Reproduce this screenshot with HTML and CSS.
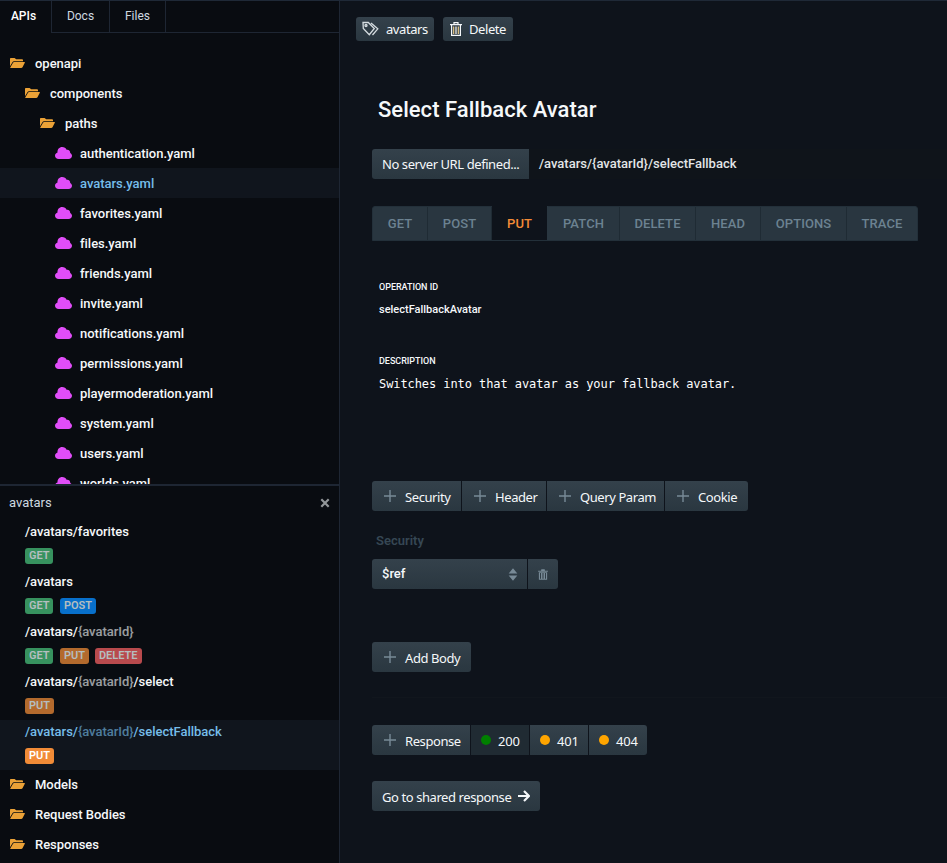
FILE: index.html
```html
<!DOCTYPE html>
<html lang="en">
<head>
<meta charset="utf-8">
<title>API editor</title>
<link rel="stylesheet" href="styles.css">
</head>
<body>
<svg class="defs" aria-hidden="true">
  <symbol id="folder" viewBox="0 0 15 10"><path d="M0 .8Q0 0 .8 0H4.600L6.200 1.200H12Q13 1.200 13 2V3.300H4Q3 3.300 2.600 4L0 8.300Z"/><path d="M4.100 4H14.400Q15.200 4 14.800 4.800L12.500 9.200Q12.100 10 11.200 10H.7Q0 10 .4 9.200L3 4.800Q3.400 4 4.100 4Z"/></symbol>
  <symbol id="cloud" viewBox="0 0 17 12"><path d="M3.700 12C1.500 12 0 10.600 0 8.700 0 7 1.200 5.800 2.500 5.400 2.300 2.400 4.300 0 7.200 0 9.300 0 10.800 1 11.600 2.700 13.800 2.300 15.400 3.800 15.200 5.900 16.300 6.500 17 7.500 17 8.700 17 10.600 15.600 12 13.500 12Z"/></symbol>
  <symbol id="trash" viewBox="0 0 16 16"><path fill-rule="evenodd" d="M14.500 3h-4V1.500Q10.500 1 10 1H6Q5.500 1 5.500 1.500V3h-4v1.300h13zM2.500 5h11v10H2.500zM4 6v7.500h1.300V6zM7.300 6v7.500h1.400V6zM10.700 6v7.500H12V6z"/></symbol>
  <symbol id="trash-outline" viewBox="0 0 12 14"><path fill="none" stroke="currentColor" stroke-width="1.200" d="M0 2.600h12M4 2.500V.7h4v1.800M1.600 3v10.300h8.800V3"/><path fill="#d8bc80" d="M3 4.500h1.300V12H3z"/><path d="M5.400 4.500h1.200V12H5.400z"/><path fill="#d8bc80" d="M7.700 4.500H9V12H7.700z"/></symbol>
  <symbol id="plus" viewBox="0 0 12 12"><path d="M5.300 0h1.400v5.300H12v1.400H6.700V12H5.300V6.700H0V5.300h5.300z"/></symbol>
</svg>
<div class="app">
  <aside class="sidebar">
    <nav class="tabs"><span class="tab tab-apis">APIs</span><span class="tab tab-docs">Docs</span><span class="tab tab-files">Files</span><span class="tab-fill"></span></nav>
    <div class="tree">
      <div class="row"><svg class="folder"><use href="#folder"/></svg><span>openapi</span></div>
      <div class="row level-1"><svg class="folder"><use href="#folder"/></svg><span>components</span></div>
      <div class="row level-2"><svg class="folder"><use href="#folder"/></svg><span>paths</span></div>
      <div class="row level-3"><svg class="cloud"><use href="#cloud"/></svg><span>authentication.yaml</span></div>
      <div class="row level-3 selected"><svg class="cloud"><use href="#cloud"/></svg><span>avatars.yaml</span></div>
      <div class="row level-3"><svg class="cloud"><use href="#cloud"/></svg><span>favorites.yaml</span></div>
      <div class="row level-3"><svg class="cloud"><use href="#cloud"/></svg><span>files.yaml</span></div>
      <div class="row level-3"><svg class="cloud"><use href="#cloud"/></svg><span>friends.yaml</span></div>
      <div class="row level-3"><svg class="cloud"><use href="#cloud"/></svg><span>invite.yaml</span></div>
      <div class="row level-3"><svg class="cloud"><use href="#cloud"/></svg><span>notifications.yaml</span></div>
      <div class="row level-3"><svg class="cloud"><use href="#cloud"/></svg><span>permissions.yaml</span></div>
      <div class="row level-3"><svg class="cloud"><use href="#cloud"/></svg><span>playermoderation.yaml</span></div>
      <div class="row level-3"><svg class="cloud"><use href="#cloud"/></svg><span>system.yaml</span></div>
      <div class="row level-3"><svg class="cloud"><use href="#cloud"/></svg><span>users.yaml</span></div>
      <div class="row level-3"><svg class="cloud"><use href="#cloud"/></svg><span>worlds.yaml</span></div>
    </div>
    <div class="search"><span>avatars</span><svg class="close" viewBox="0 0 10 10"><path d="M1.300 1.300l7.400 7.400M8.700 1.300L1.300 8.700"/></svg></div>
    <div class="entry"><div class="path">/avatars/favorites</div><div class="badges"><b class="get">GET</b></div></div>
    <div class="entry"><div class="path">/avatars</div><div class="badges"><b class="get">GET</b><b class="post">POST</b></div></div>
    <div class="entry"><div class="path">/avatars/<i>{avatarId}</i></div><div class="badges"><b class="get">GET</b><b class="put">PUT</b><b class="delete">DELETE</b></div></div>
    <div class="entry"><div class="path">/avatars/<i>{avatarId}</i>/select</div><div class="badges"><b class="put">PUT</b></div></div>
    <div class="entry selected"><div class="path">/avatars/<i>{avatarId}</i>/selectFallback</div><div class="badges"><b class="put">PUT</b></div></div>
    <div class="row"><svg class="folder"><use href="#folder"/></svg><span>Models</span></div>
    <div class="row"><svg class="folder"><use href="#folder"/></svg><span>Request Bodies</span></div>
    <div class="row"><svg class="folder"><use href="#folder"/></svg><span>Responses</span></div>
  </aside>
  <main class="main">
    <div class="toolbar">
      <div class="btn small tag-btn"><svg class="tags" viewBox="0 0 18 16"><path d="M1 1.500h5.300l6 6-5 6.200L1.300 7.500zM9 2l6.800 5.800-5.300 6.200"/><circle cx="4" cy="4.500" r="1"/></svg><span>avatars</span></div>
      <div class="btn small delete-btn"><svg class="trash-outline"><use href="#trash-outline"/></svg><span>Delete</span></div>
    </div>
    <h1>Select Fallback Avatar</h1>
    <div class="url"><div class="btn server"><span>No server URL defined...</span></div><div class="url-path">/avatars/{avatarId}/selectFallback</div></div>
    <div class="methods"><span class="m-get">GET</span><span class="m-post">POST</span><span class="m-put active">PUT</span><span class="m-patch">PATCH</span><span class="m-delete">DELETE</span><span class="m-head">HEAD</span><span class="m-options">OPTIONS</span><span class="m-trace">TRACE</span></div>
    <div class="field-label">OPERATION ID</div>
    <div class="operation">selectFallbackAvatar</div>
    <div class="field-label description-label">DESCRIPTION</div>
    <div class="description">Switches into that avatar as your fallback avatar.</div>
    <div class="group adders">
      <div class="btn w-security"><svg class="plus"><use href="#plus"/></svg><span>Security</span></div>
      <div class="btn w-header"><svg class="plus"><use href="#plus"/></svg><span>Header</span></div>
      <div class="btn w-query"><svg class="plus"><use href="#plus"/></svg><span>Query Param</span></div>
      <div class="btn w-cookie"><svg class="plus"><use href="#plus"/></svg><span>Cookie</span></div>
    </div>
    <div class="section-title">Security</div>
    <div class="group security">
      <div class="btn ref"><span>$ref</span><svg class="sort" viewBox="0 0 8 12"><path d="M0 5L4 .2 8 5zM0 7h8L4 11.800z"/></svg></div>
      <div class="btn remove"><svg class="trash"><use href="#trash"/></svg></div>
    </div>
    <div class="group body-group"><div class="btn w-body"><svg class="plus"><use href="#plus"/></svg><span>Add Body</span></div></div>
    <div class="divider"></div>
    <div class="group responses">
      <div class="btn w-response"><svg class="plus"><use href="#plus"/></svg><span>Response</span></div>
      <div class="btn code on"><em class="ok"></em><span>200</span></div>
      <div class="btn code"><em></em><span>401</span></div>
      <div class="btn code"><em></em><span>404</span></div>
    </div>
    <div class="group"><div class="btn shared"><span>Go to shared response</span><svg class="arrow" viewBox="0 0 12 12"><path d="M0 6h11M6 1l5 5-5 5"/></svg></div></div>
  </main>
</div>
</body>
</html>
```
FILE: styles.css
```css
* { box-sizing: border-box; }
body { margin: 0; background: #0e131b; color: #f5f8fa; font: 500 13px/20px Roboto, sans-serif; overflow: hidden; }
.defs { position: absolute; width: 0; height: 0; }
svg { flex: none; fill: currentColor; }
.app { display: flex; height: 863px; border-top: 1px solid #1f2937; }

.sidebar { width: 340px; flex: none; background: #090c11; border-right: 1px solid #1e2633; overflow: hidden; }
.tabs { display: flex; height: 32px; font-size: 12px; font-weight: 400; line-height: 30px; color: #ced9e0; }
.tab { border-right: 1px solid #1e2633; border-bottom: 1px solid #1e2633; text-align: center; }
.tab-apis { width: 52px; padding-right: 4px; border-bottom: 0; color: #fff; font-weight: 500; }
.tab-docs { width: 58px; }
.tab-files { width: 56px; }
.tab-fill { flex: 1; border-bottom: 1px solid #1e2633; }
.tree { height: 451px; padding-top: 15px; overflow: hidden; }
.row { display: flex; align-items: center; height: 30px; padding-left: 10px; letter-spacing: -.02px; }
.row span { padding-top: 2px; }
.level-1 { padding-left: 25px; }
.level-2 { padding-left: 40px; }
.level-3 { padding-left: 55px; }
.folder { width: 15px; height: 10px; margin-right: 10px; color: #eba237; }
.cloud { width: 17px; height: 12px; margin-right: 8px; color: #e04df8; }
.selected { background: #10151d; color: #76bdea; }
.search { display: flex; align-items: center; justify-content: space-between; height: 36px; padding: 0 9px 1px; border-top: 2px solid #1e2633; font-weight: 400; color: #ced9e0; }
.close { width: 10px; height: 10px; margin-top: 1px; fill: none; stroke: #929699; stroke-width: 2.2; }
.entry { height: 50px; padding: 2px 25px 0; }
.entry .path { height: 20px; letter-spacing: -.02px; }
.entry i { font-style: normal; opacity: .62; }
.badges { display: flex; gap: 7px; padding-top: 6px; }
.badges b { height: 16px; padding: 0 4px; border-radius: 3px; font-size: 11px; font-weight: 600; line-height: 15px; color: #b5bec0; letter-spacing: -.05px; }
.get { background: #37925f; width: 28px; }
.post { background: #0870cb; width: 36px; }
.put { background: #b36a2d; width: 29px; }
.delete { background: #b84a4d; width: 47px; }
.put + .delete { margin-left: -1px; }
.selected .put { background: #f18b37; color: #fff; }
.entry + .row, .entry + .row ~ .row { position: relative; top: -1px; }

.main { flex: 1; min-width: 0; padding: 16px 0 0 32px; }
.btn { display: flex; align-items: center; flex: none; height: 30px; background: linear-gradient(#34414b, #2a3740); color: #f5f8fa; font: 400 13px/20px "Noto Sans", "Open Sans", sans-serif; white-space: nowrap; letter-spacing: -.42px; }
.btn span { position: relative; top: 1px; }
.toolbar { display: flex; gap: 9px; margin-left: -16px; }
.small { height: 24px; border-radius: 3px; }
.small span { top: 0; }
.tag-btn { width: 78px; padding-left: 6px; }
.tags { width: 18px; height: 16px; margin-right: 6px; fill: none; stroke: #d5dce0; stroke-width: 1.3; }
.delete-btn { width: 70px; padding-left: 7px; }
.trash-outline { width: 12px; height: 14px; margin-right: 7px; }
.trash { width: 14px; height: 14px; }
h1 { margin: 54px 0 0 6px; font: 500 22px/30px Roboto, sans-serif; letter-spacing: .03px; }
.url { display: flex; margin-top: 24px; }
.server { width: 157px; padding-left: 10px; border-radius: 3px 0 0 3px; }
.server span { top: 0; }
.url-path { flex: 1; padding-left: 10px; line-height: 29px; background: #0f141a; color: #e2e5e7; }
.methods { display: flex; width: 546px; height: 35px; margin-top: 27px; border: 1px solid #23303a; border-radius: 3px 3px 0 0; background: #293640; line-height: 33px; color: #6c8291; letter-spacing: .1px; }
.methods span { border-right: 1px solid #1f2b34; text-align: center; }
.m-get { width: 55px; }
.m-post { width: 64px; }
.methods .active { width: 56px; height: 34px; margin-top: -1px; padding-top: 1px; background: #0e131b; color: #f48b37; border-right-color: #293640; }
.m-patch { width: 72px; }
.m-delete { width: 76px; }
.m-head { width: 65px; }
.m-options { width: 86px; }
.methods .m-trace { width: 70px; border: 0; }
.field-label { margin: 37px 0 0 7px; font-size: 9px; line-height: 18px; letter-spacing: -.03px; }
.operation { margin: 5px 0 0 7px; font-size: 11px; line-height: 18px; }
.description-label { margin-top: 33px; }
.description { margin: 5px 0 0 7px; font: 400 12px/18px "DejaVu Sans Mono", monospace; letter-spacing: -.08px; color: #fff; }
.group { display: flex; gap: 1px; }
.group .btn:first-child { border-radius: 3px 0 0 3px; }
.group .btn:last-child { border-radius: 0 3px 3px 0; }
.group .btn:only-child { border-radius: 3px; }
.adders { margin-top: 88px; }
.plus { width: 12px; height: 12px; margin: 0 9px 0 12px; color: #788a97; }
.w-security { width: 89px; }
.w-header { width: 84px; }
.w-query { width: 117px; }
.w-cookie { width: 83px; }
.section-title { margin: 20px 0 8px 4px; color: #364754; font-weight: 600; }
.ref { width: 155px; padding: 0 10px; justify-content: space-between; font-family: Roboto, sans-serif; font-weight: 500; letter-spacing: 0; }
.ref span { top: 0; }
.sort { width: 10px; height: 13px; margin-right: -1px; color: #788a97; }
.remove { width: 30px; padding-left: 9px; color: #788a97; }
.remove .trash { width: 12px; height: 13px; }
.body-group { margin-top: 53px; }
.w-body { width: 99px; }
.divider { height: 1px; margin-top: 25px; background: #11161d; }
.responses { margin: 27px 0 26px; }
.w-response { width: 98px; }
.code { width: 58px; padding-left: 10px; letter-spacing: -.2px; }
.on { background: #202b33; }
.code em { width: 10px; height: 10px; margin: 0 7px 0 0; border-radius: 50%; background: #ffa500; }
.code .ok { background: #008000; }
.shared { width: 168px; padding-left: 10px; }
.arrow { width: 12px; height: 12px; margin-left: 7px; fill: none; stroke: currentColor; stroke-width: 2.2; }
```
